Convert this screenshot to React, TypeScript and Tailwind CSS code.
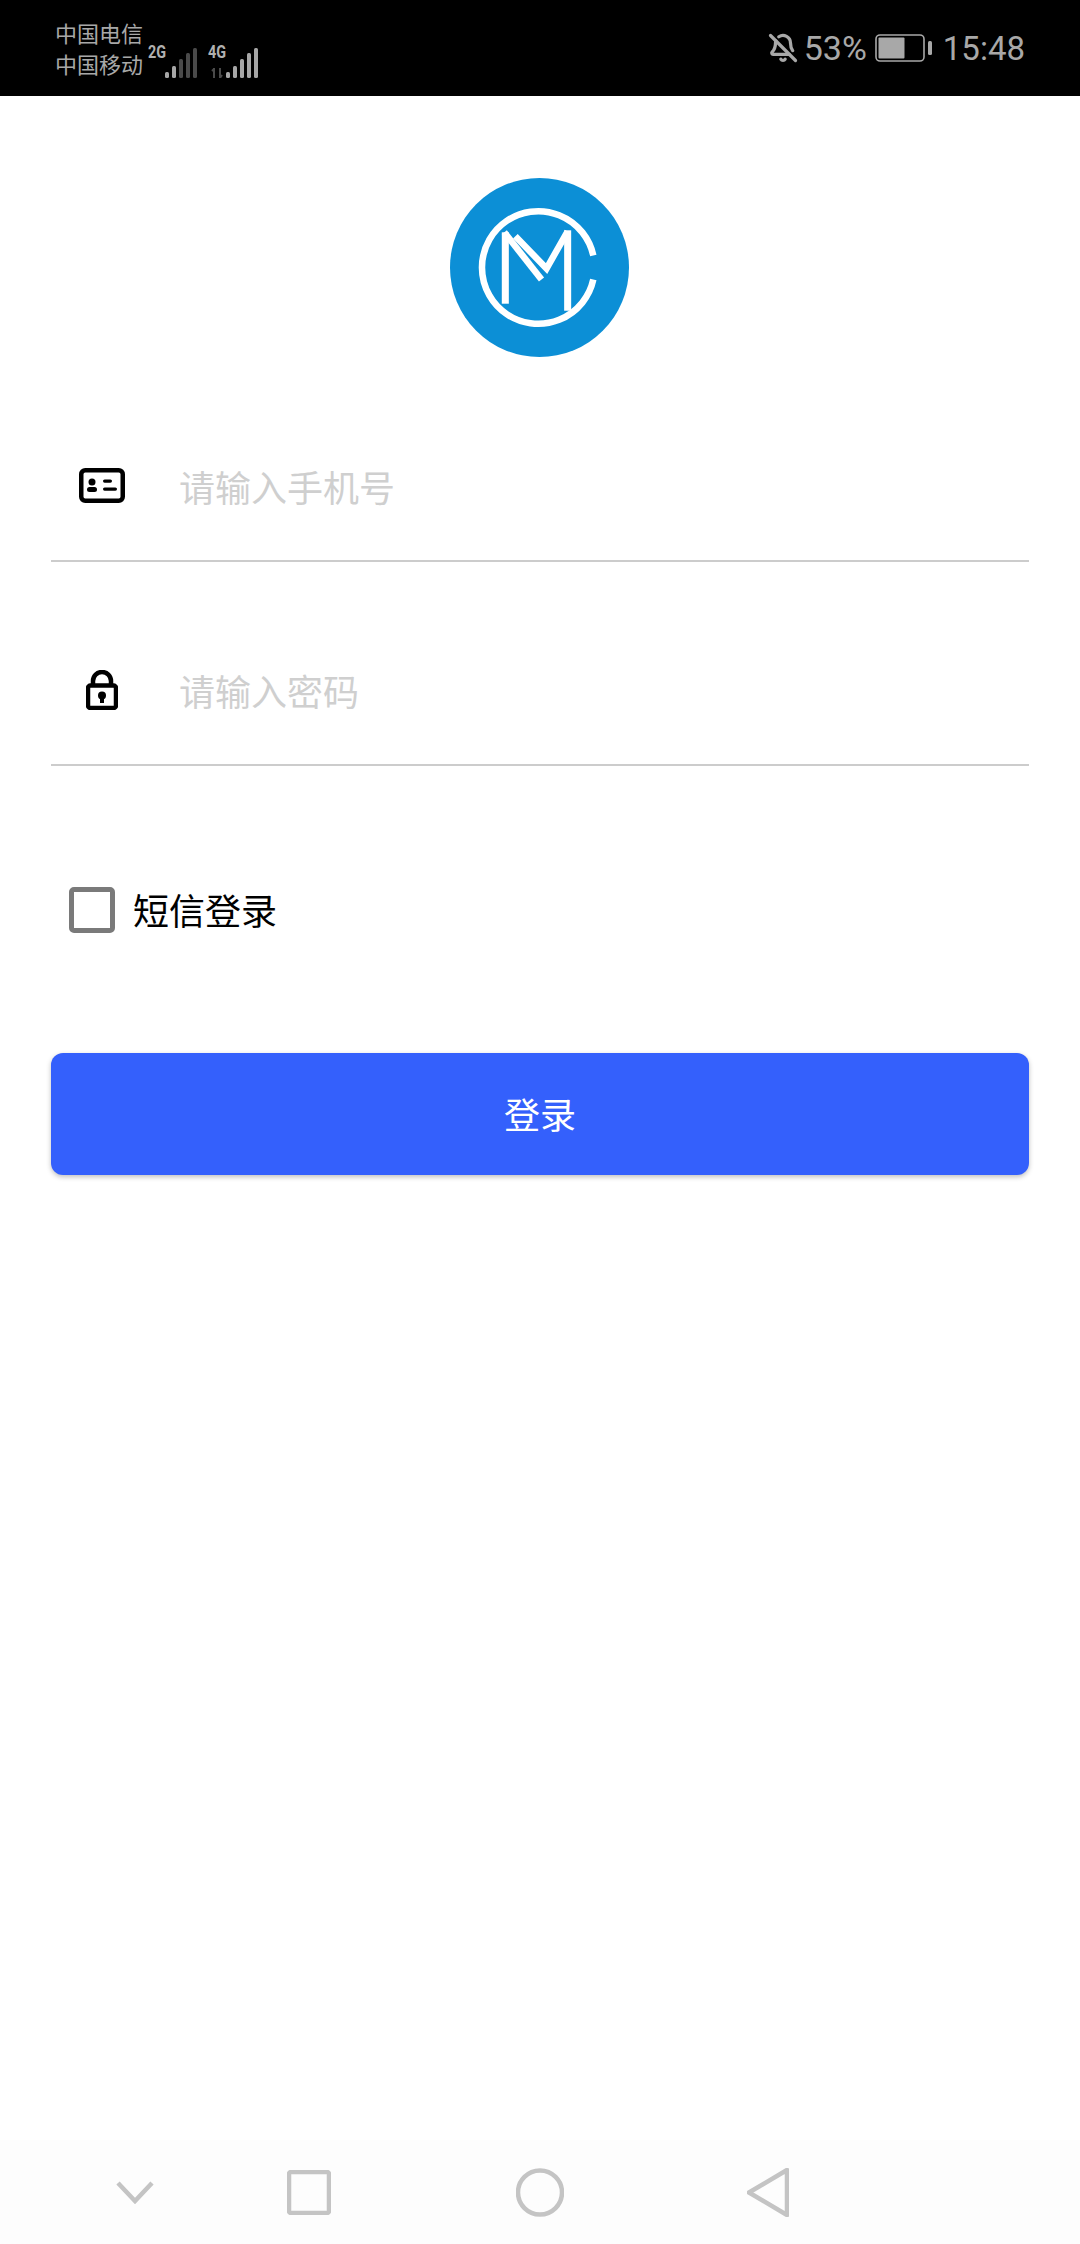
import { BellOff } from "lucide-react";

const CJK = "font-['Noto_Sans_CJK_SC','Noto_Sans',sans-serif]";

// Five-step cellular meter; `lit` says how many bars are bright.
function SignalBars({ lit }: { lit: number }) {
  const heights = [6, 12, 19, 25, 30];
  return (
    <svg width="32" height="30" viewBox="0 0 32 30" className="block">
      {heights.map((h, i) => (
        <rect
          key={i}
          x={i * 7}
          y={30 - h}
          width="4"
          height={h}
          rx="1.5"
          fill={i < lit ? "#a6a6a6" : "#4a4a4a"}
        />
      ))}
    </svg>
  );
}

function StatusBar() {
  return (
    <div className="flex h-[96px] shrink-0 items-center justify-between bg-black pl-[55px] pr-[55px] text-[#a8a8a8]">
      <div className="flex items-center">
        <div className={`${CJK} flex flex-col pb-[1px] text-[22px] leading-[31px]`}>
          <span>中国电信</span>
          <span>中国移动</span>
        </div>
        <div className="relative ml-[5px] h-[32px] w-[49px] self-end">
          <span className="absolute left-0 top-[-7px] origin-left scale-x-[0.8] font-['Roboto',sans-serif] text-[18px] font-bold leading-[22px] text-[#b0b0b0]">
            2G
          </span>
          <div className="absolute left-[17px] top-[0px]">
            <SignalBars lit={2} />
          </div>
        </div>
        <div className="relative ml-[11px] h-[32px] w-[50px] self-end">
          <span className="absolute left-0 top-[-7px] origin-left scale-x-[0.8] font-['Roboto',sans-serif] text-[18px] font-bold leading-[22px] text-[#b0b0b0]">
            4G
          </span>
          <svg width="12" height="10" viewBox="0 0 12 10" className="absolute left-[3px] top-[20px]">
            <path d="M3 0v10M1 3l2-2M9 0v10l2-3" stroke="#4a4a4a" strokeWidth="2" fill="none" />
          </svg>
          <div className="absolute left-[18px] top-[0px]">
            <SignalBars lit={5} />
          </div>
        </div>
      </div>
      <div className="flex items-center font-['Roboto',sans-serif] text-[33px] leading-none">
        <BellOff size={30} strokeWidth={2.6} />
        <span className="ml-[6px] text-[34px]">53%</span>
        <svg width="58" height="28" viewBox="0 0 58 28" className="ml-[8px]">
          <rect x="1" y="1" width="48" height="26" rx="4" fill="none" stroke="#a8a8a8" strokeWidth="1.6" />
          <rect x="3.5" y="3.5" width="26" height="21" rx="1" fill="#a8a8a8" />
          <rect x="53" y="7" width="4" height="14" rx="1.5" fill="#a8a8a8" />
        </svg>
        <span className="ml-[10px]">15:48</span>
      </div>
    </div>
  );
}

function Logo() {
  return (
    <svg width="179" height="179" viewBox="0 0 178 178" className="block">
      <circle cx="89" cy="89" r="89" fill="#0c8fd6" />
      <g fill="none" stroke="#ffffff" strokeWidth="6.5">
        <path d="M142.5 77A56 56 0 1 0 142.5 101" />
        <path d="M55 54V125" strokeWidth="7" />
        <path d="M117 52V132" strokeWidth="7" />
        <path d="M54 54L91 101" />
        <path d="M65 58L96 90L117 53" />
      </g>
    </svg>
  );
}

function CardIcon() {
  return (
    <svg width="46" height="35" viewBox="0 0 46 35" className="block">
      <rect x="2.25" y="2.25" width="41.5" height="30.5" rx="4" fill="none" stroke="#000" strokeWidth="4.5" />
      <circle cx="13" cy="14" r="3.5" fill="#000" />
      <rect x="8" y="19" width="10" height="5" rx="2.5" fill="#000" />
      <rect x="24" y="11.5" width="9" height="3.2" rx="1.6" fill="#000" />
      <rect x="24" y="19.5" width="14" height="3.2" rx="1.6" fill="#000" />
    </svg>
  );
}

function LockIcon() {
  return (
    <svg width="32" height="40" viewBox="0 0 32 40" className="block">
      <path d="M7 16V11a9 9 0 0 1 18 0v5" fill="none" stroke="#000" strokeWidth="4.5" />
      <rect x="2" y="15.5" width="28" height="22.5" rx="2.5" fill="none" stroke="#000" strokeWidth="4.5" />
      <circle cx="16" cy="25.5" r="4" fill="#000" />
      <rect x="14" y="26" width="4" height="7" fill="#000" />
    </svg>
  );
}

function Field({ icon, placeholder }: { icon: React.ReactNode; placeholder: string }) {
  return (
    <div className="flex h-[146px] items-center border-b-2 border-[#cccccc] pb-[4px]">
      <div className="mb-[1px] flex w-[128px] shrink-0 justify-center pr-[27px]">{icon}</div>
      <input
        placeholder={placeholder}
        className={`${CJK} w-full bg-transparent text-[36px] outline-none placeholder:text-[#cfcfcf]`}
      />
    </div>
  );
}

function NavBar() {
  const stroke = "#c4c4c4";
  return (
    <div className="flex h-[104px] shrink-0 items-center bg-[#fdfdfd] pl-[115px]">
      <svg width="40" height="24" viewBox="0 0 40 24">
        <path d="M3 3L20 21L37 3" fill="none" stroke={stroke} strokeWidth="4.5" />
      </svg>
      <svg width="44" height="45" viewBox="0 0 44 45" className="ml-[132px]">
        <rect x="2" y="2" width="40" height="41" rx="2" fill="none" stroke={stroke} strokeWidth="4.5" />
      </svg>
      <svg width="48" height="49" viewBox="0 0 48 49" className="ml-[185px]">
        <circle cx="24" cy="24.5" r="22" fill="none" stroke={stroke} strokeWidth="4.5" />
      </svg>
      <svg width="42" height="49" viewBox="0 0 42 49" className="ml-[183px]">
        <path d="M40 2V47L2 24.5Z" fill="none" stroke={stroke} strokeWidth="4.5" strokeLinejoin="round" />
      </svg>
    </div>
  );
}

export default function App() {
  return (
    <div className="flex h-[2244px] w-[1080px] flex-col overflow-hidden bg-white">
      <StatusBar />
      <main className="flex flex-1 flex-col px-[51px] pt-[82px]">
        <div className="flex justify-center pr-[2px]">
          <Logo />
        </div>
        <div className="mt-[59px] flex flex-col gap-[58px]">
          <Field icon={<CardIcon />} placeholder="请输入手机号" />
          <Field icon={<LockIcon />} placeholder="请输入密码" />
        </div>
        <label className="ml-[18px] mt-[120px] flex items-center">
          <span className="h-[46px] w-[46px] rounded-[5px] border-[5px] border-[#7a7a7a] bg-white" />
          <span className={`${CJK} ml-[18px] pb-[2px] text-[36px] leading-[46px] text-black`}>短信登录</span>
        </label>
        <button
          className={`${CJK} mt-[119px] h-[122px] w-full rounded-[12px] bg-[#3460fc] pb-[2px] text-[36px] text-white shadow-[0_2px_5px_rgba(0,0,0,0.25)]`}
        >
          登录
        </button>
      </main>
      <NavBar />
    </div>
  );
}
